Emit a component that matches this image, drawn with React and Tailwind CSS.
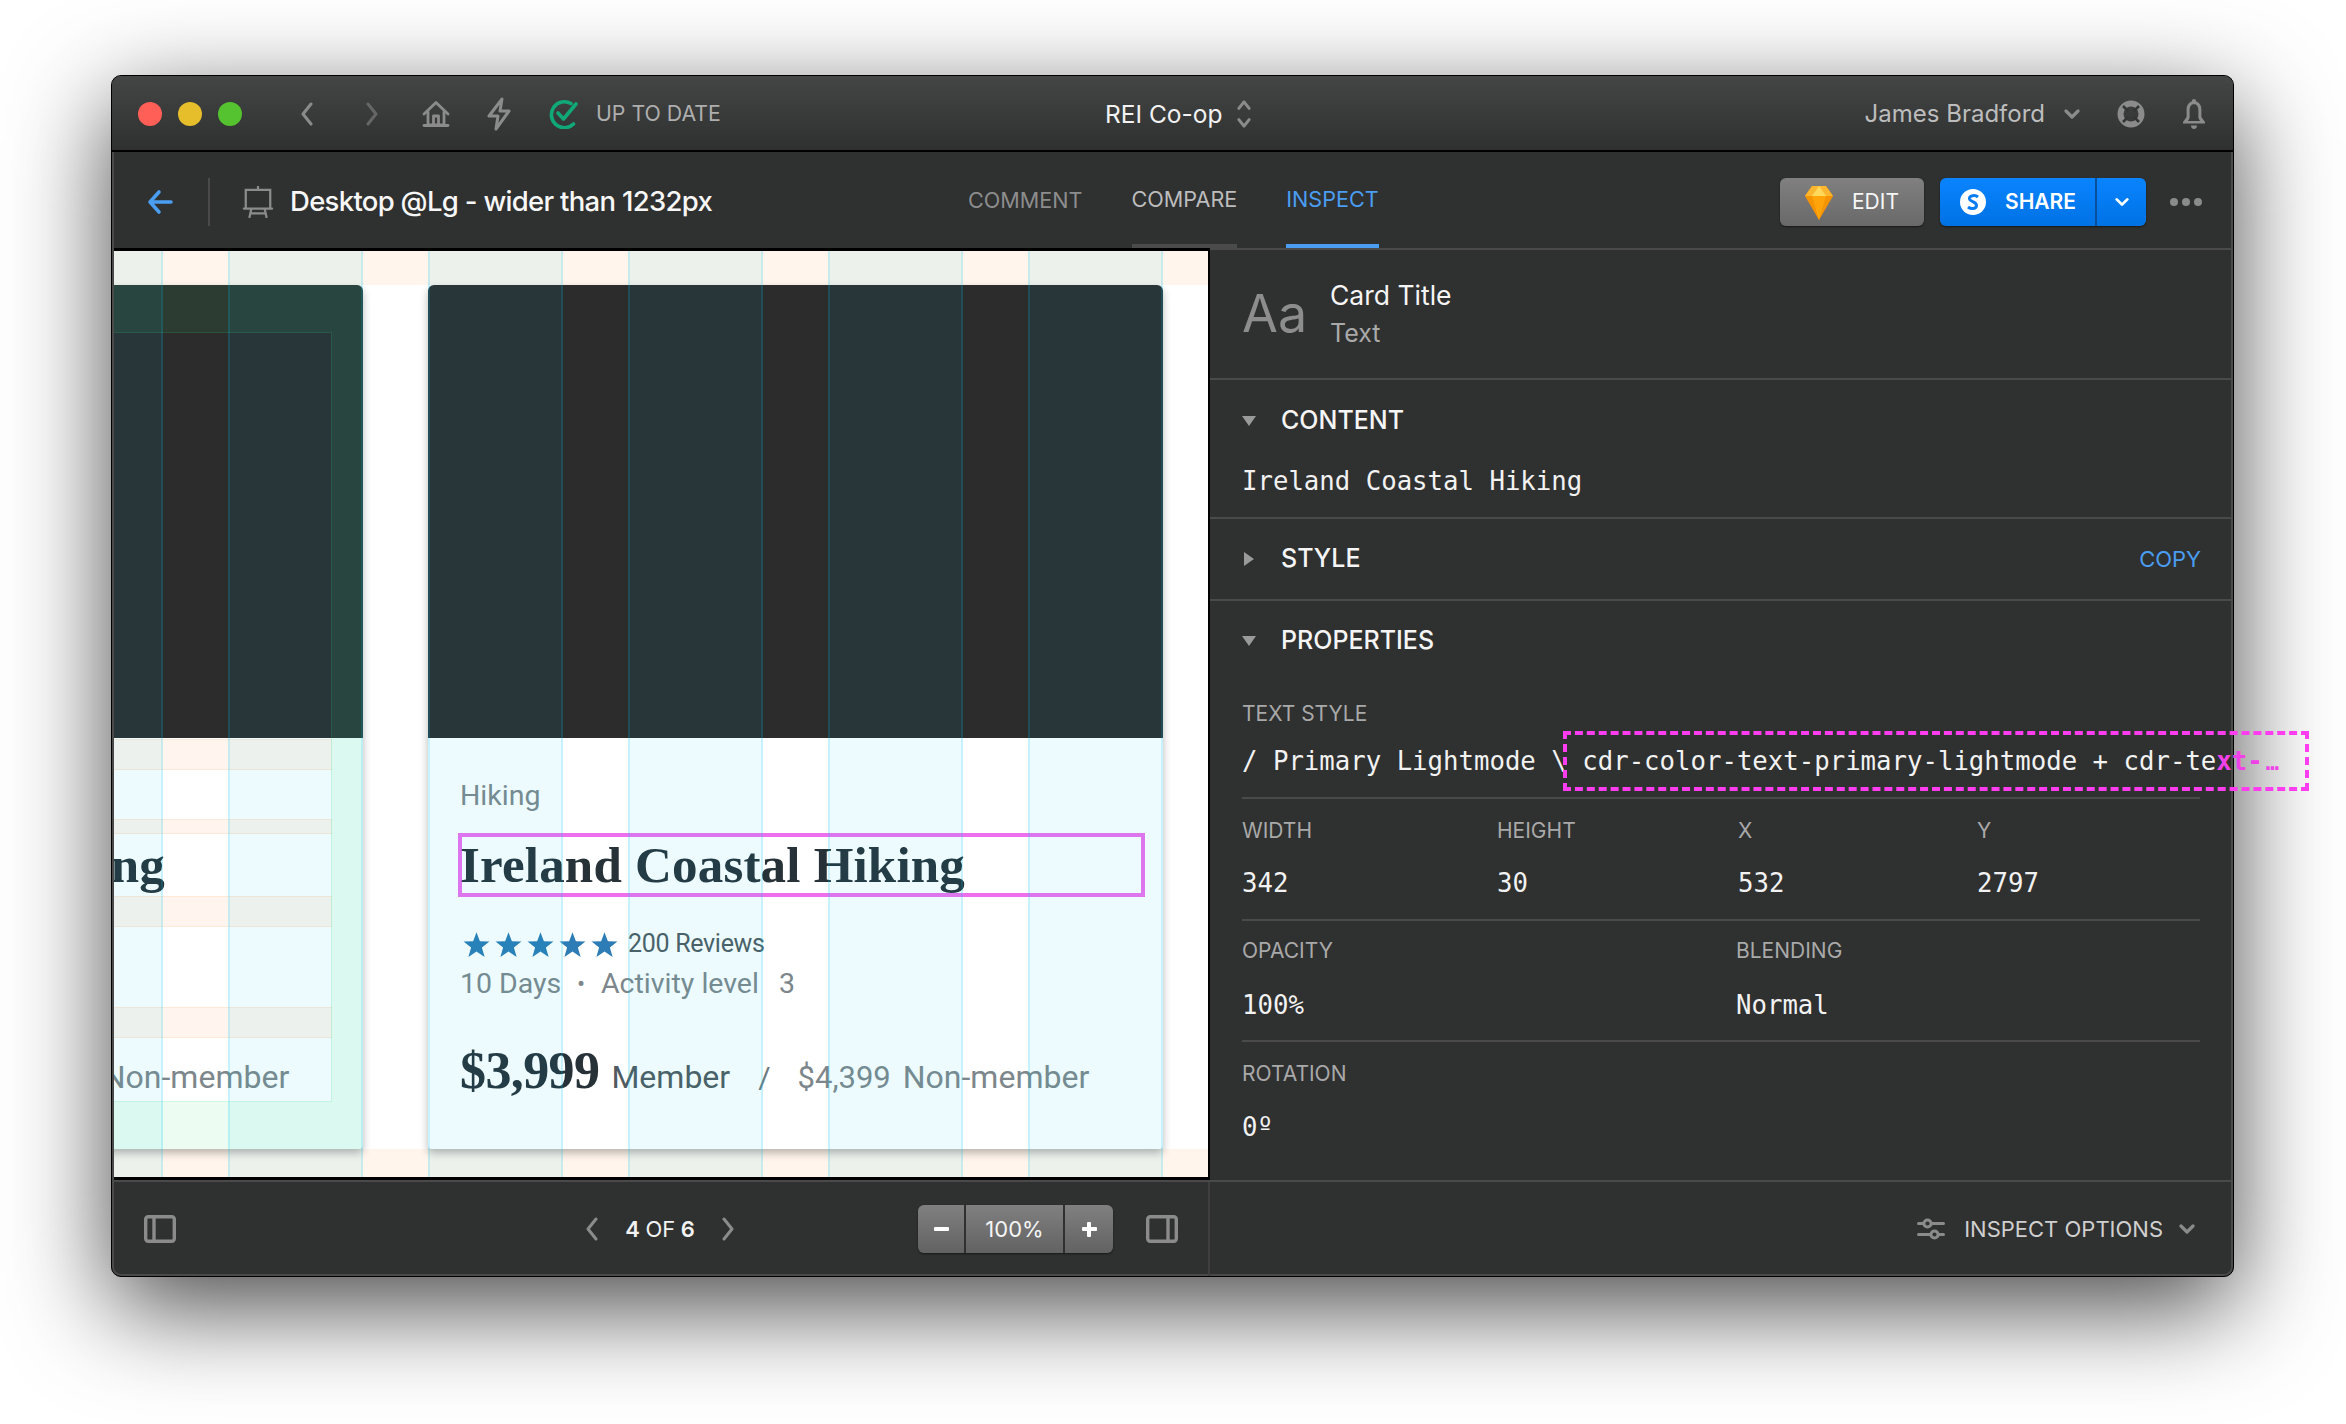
const uiFont = { fontFamily: '"Inter", "Liberation Sans", sans-serif' };

const GUIDE_COLS = [49, 135, 135, 135, 135, 135];

const Chevron = ({ dir = "left", className = "" }) => {
  const paths = {
    left: "M11 2 L3 12 L11 22",
    right: "M3 2 L11 12 L3 22",
  };
  return (
    <svg viewBox="0 0 14 24" className={className} fill="none" stroke="currentColor" strokeWidth="3" strokeLinecap="round" strokeLinejoin="round">
      <path d={paths[dir]} />
    </svg>
  );
};

const ChevronDown = ({ className = "" }) => (
  <svg viewBox="0 0 16 10" className={className} fill="none" stroke="currentColor" strokeWidth="3.2" strokeLinecap="round" strokeLinejoin="round">
    <path d="M2 2 L8 8 L14 2" />
  </svg>
);

const Triangle = ({ open }) => (
  <svg viewBox="0 0 14 14" className="h-[14px] w-[14px] text-[#9a9a9a]" fill="currentColor">
    {open ? <path d="M0 2 H14 L7 12 Z" /> : <path d="M2 0 V14 L12 7 Z" />}
  </svg>
);

const Star = () => (
  <svg viewBox="0 0 24 24" className="h-[27px] w-[27px] text-[#2d7cb5]" fill="currentColor">
    <path d="M12 1 L15 9 L23.5 9.4 L16.8 14.6 L19.2 23 L12 18.2 L4.8 23 L7.2 14.6 L.5 9.4 L9 9 Z" />
  </svg>
);

const Band = ({ className = "" }) => (
  <div className={`absolute right-[31px] left-[31px] border-y border-[rgba(255,140,40,0.12)] bg-[rgba(255,130,40,0.08)] ${className}`} />
);

const TripCard = ({ framed, selected }) => (
  <div className="relative h-full w-[735px] shrink-0 rounded-t-[6px] rounded-b-[4px] bg-white shadow-[0_4px_8px_rgba(0,0,0,0.28)]">
    <div className="h-[453px] rounded-t-[6px] bg-[#2c2c2c]" />
    <div className="pt-[40px] pl-[32px]" style={{ fontFamily: '"Roboto", sans-serif' }}>
      <p className="text-[28.5px] leading-[36px] text-[#7d878b]">Hiking</p>
      <div className={`mt-[19px] -ml-[2px] h-[64px] w-[687px] border-[4px] ${selected ? "border-[#ee6fee]" : "border-transparent"}`}>
        <p className="-ml-[2px] whitespace-nowrap font-['Liberation_Serif',serif] text-[51px] leading-[56px] font-bold tracking-[0.2px] text-[#263238]">
          Ireland Coastal Hiking
        </p>
      </div>
      <div className="mt-[31px] flex h-[32px] items-center">
        <div className="flex w-[168px] gap-[5px] pl-[3px]">
          <Star />
          <Star />
          <Star />
          <Star />
          <Star />
        </div>
        <span className="text-[25px] tracking-[-0.3px] text-[#4f5b60]">200 Reviews</span>
      </div>
      <div className="mt-[6px] flex h-[36px] items-center text-[28.5px] text-[#7d878b]">
        <span className="w-[103px]">10 Days</span>
        <span className="w-[38px] pl-[14px] text-[24px]">•</span>
        <span className="w-[178px] whitespace-nowrap">Activity level</span>
        <span>3</span>
      </div>
      <div className="mt-[30px] flex h-[60px] items-baseline whitespace-nowrap">
        <span className="font-['Liberation_Serif',serif] text-[52px] font-bold tracking-[-0.6px] text-[#263238]">$3,999</span>
        <span className="ml-[12px] text-[32px] text-[#4f5b60]">Member</span>
        <span className="ml-[28px] text-[30px] text-[#6f7a7f]">/</span>
        <span className="ml-[27px] text-[31px] text-[#7d878b]">$4,399</span>
        <span className="ml-[12px] text-[32px] text-[#7d878b]">Non-member</span>
      </div>
    </div>
    {framed && (
      <>
        <Band className="top-[454px] h-[31px]" />
        <Band className="top-[534px] h-[15px]" />
        <Band className="top-[611px] h-[31px]" />
        <Band className="top-[722px] h-[31px]" />
        <div className="absolute inset-0 rounded-t-[6px] border-x-[31px] border-y-[47px] border-[rgba(40,225,110,0.09)]">
          <div className="h-full w-full border border-[rgba(40,225,110,0.22)]" />
        </div>
      </>
    )}
  </div>
);

const Guides = () => (
  <div className="pointer-events-none absolute inset-0 flex">
    {GUIDE_COLS.map((width, i) => (
      <div key={i} className="flex shrink-0">
        <div
          className={`h-full border-r-2 border-[rgba(0,200,240,0.16)] bg-[rgba(0,200,240,0.07)] ${i > 0 ? "border-l-2" : ""}`}
          style={{ width }}
        />
        <div className="h-full w-[65px]" />
      </div>
    ))}
  </div>
);

const Canvas = () => (
  <div className="relative h-full w-[1096px] shrink-0 overflow-hidden border-y-[3px] border-r-2 border-black bg-white">
    <div className="flex h-full flex-col">
      <div className="h-[34px] shrink-0 bg-[#fff5ec]" />
      <div className="flex min-h-0 flex-1 gap-[65px]">
        <div className="-ml-[486px]">
          <TripCard framed />
        </div>
        <TripCard selected />
      </div>
      <div className="h-[28px] shrink-0 bg-[#fff5ec]" />
    </div>
    <Guides />
  </div>
);

const Label = ({ children }) => <p className="text-[21px] leading-[30px] text-[#a9a9a9]">{children}</p>;

const Mono = ({ children, className = "" }) => (
  <p className={`font-['DejaVu_Sans_Mono',monospace] text-[25.7px] leading-[30px] whitespace-nowrap text-[#f2f2f2] ${className}`}>{children}</p>
);

const Rule = ({ className = "" }) => <div className={`h-[2px] w-[958px] bg-[#4a4a4a] ${className}`} />;

const Heading = ({ open, children, right }) => (
  <div className="flex h-full items-center pr-[32px] pl-[32px]">
    <Triangle open={open} />
    <span className="ml-[25px] text-[25px] font-medium text-[#f5f5f5]">{children}</span>
    {right}
  </div>
);

const InspectPanel = () => (
  <div className="flex min-w-0 flex-1 flex-col border-t-2 border-[#4a4a4a]">
    <div className="flex h-[130px] shrink-0 items-center border-b-2 border-[#4a4a4a] pl-[32px]">
      <span className="w-[88px] text-[52px] leading-none text-[#8d8d8d]">Aa</span>
      <div>
        <p className="text-[26.5px] leading-[38px] text-[#f5f5f5]">Card Title</p>
        <p className="text-[25px] leading-[38px] text-[#a9a9a9]">Text</p>
      </div>
    </div>
    <div className="h-[139px] shrink-0 border-b-2 border-[#4a4a4a]">
      <div className="h-[82px]">
        <Heading open>CONTENT</Heading>
      </div>
      <Mono className="pl-[32px] leading-[38px]">Ireland Coastal Hiking</Mono>
    </div>
    <div className="h-[82px] shrink-0 border-b-2 border-[#4a4a4a]">
      <Heading right={<span className="ml-auto text-[22px] text-[#4a9df0]">COPY</span>}>STYLE</Heading>
    </div>
    <div className="relative flex-1 pl-[32px]">
      <div className="-ml-[32px] h-[80px]">
        <Heading open>PROPERTIES</Heading>
      </div>
      <div className="mt-[18px]">
        <Label>TEXT STYLE</Label>
      </div>
      <Mono className="mt-[17px]">
        / Primary Lightmode \ cdr-color-text-primary-lightmode + cdr-te
        <span className="font-bold text-[#f040e8]">xt-</span>
        <span className="ml-[3px] text-[22px] font-bold text-[#f040e8]">…</span>
      </Mono>
      <div className="absolute top-[130px] left-[353px] h-[60px] w-[746px] border-[4px] border-dashed border-[#ff3df0]" />
      <Rule className="mt-[19px]" />
      <div className="mt-[17px] grid grid-cols-[255px_241px_239px_1fr]">
        {["WIDTH", "HEIGHT", "X", "Y"].map((label) => (
          <Label key={label}>{label}</Label>
        ))}
      </div>
      <div className="mt-[22px] grid grid-cols-[255px_241px_239px_1fr]">
        {["342", "30", "532", "2797"].map((value) => (
          <Mono key={value}>{value}</Mono>
        ))}
      </div>
      <Rule className="mt-[21px]" />
      <div className="mt-[15px] grid grid-cols-[494px_1fr]">
        <Label>OPACITY</Label>
        <Label>BLENDING</Label>
      </div>
      <div className="mt-[24px] grid grid-cols-[494px_1fr]">
        <Mono>100%</Mono>
        <Mono>Normal</Mono>
      </div>
      <Rule className="mt-[20px]" />
      <div className="mt-[17px]">
        <Label>ROTATION</Label>
      </div>
      <Mono className="mt-[23px]">0º</Mono>
    </div>
  </div>
);

const PanelIcon = ({ side }) => (
  <svg viewBox="0 0 32 28" className="h-[28px] w-[32px] text-[#8b8b8b]" fill="none" stroke="currentColor" strokeWidth="3.4">
    <rect x="1.7" y="1.7" width="28.6" height="24.6" rx="2.5" />
    <path d={side === "left" ? "M10 2 V26" : "M22 2 V26"} />
  </svg>
);

const BottomBar = () => (
  <div className="flex h-[96px] shrink-0 border-t-2 border-[#4a4a4a]">
    <div className="grid w-[1098px] grid-cols-[1fr_auto_1fr] items-center border-r-2 border-[#3f3f3f]">
      <div className="pl-[32px]">
        <PanelIcon side="left" />
      </div>
      <div className="flex items-center text-[#8b8b8b]">
        <Chevron dir="left" className="h-[24px] w-[14px]" />
        <span className="mx-[26px] text-[22px] font-semibold text-[#f2f2f2]">
          4 <span className="font-normal">OF</span> 6
        </span>
        <Chevron dir="right" className="h-[24px] w-[14px]" />
      </div>
      <div className="flex items-center justify-end gap-[33px] pr-[30px]">
        <div className="flex h-[48px] w-[195px] overflow-hidden rounded-[6px] bg-gradient-to-b from-[#808080] to-[#626262] text-[#f5f5f5] shadow-[0_1px_2px_rgba(0,0,0,0.5)]">
          <div className="flex w-[48px] items-center justify-center border-r-2 border-[#2f3030]">
            <span className="h-[4px] w-[15px] rounded-[1px] bg-white" />
          </div>
          <div className="flex flex-1 items-center justify-center border-r-2 border-[#2f3030] text-[22px]">100%</div>
          <div className="relative flex w-[48px] items-center justify-center">
            <span className="h-[4px] w-[15px] rounded-[1px] bg-white" />
            <span className="absolute h-[15px] w-[4px] rounded-[1px] bg-white" />
          </div>
        </div>
        <PanelIcon side="right" />
      </div>
    </div>
    <div className="flex flex-1 items-center justify-end pr-[38px]">
      <svg viewBox="0 0 28 24" className="h-[24px] w-[28px] text-[#8b8b8b]" fill="none" stroke="currentColor" strokeWidth="3" strokeLinecap="round">
        <path d="M1.5 6.5 H6 M15 6.5 H26.5 M1.5 17.5 H13 M22 17.5 H26.5" />
        <circle cx="10.5" cy="6.5" r="3.6" />
        <circle cx="17.5" cy="17.5" r="3.6" />
      </svg>
      <span className="ml-[19px] text-[22px] text-[#cfcfcf]">INSPECT OPTIONS</span>
      <ChevronDown className="ml-[16px] h-[10px] w-[16px] text-[#8b8b8b]" />
    </div>
  </div>
);

const TitleBar = () => (
  <div className="flex h-[76px] shrink-0 items-center rounded-t-[9px] border-b-2 border-black bg-gradient-to-b from-[#444545] to-[#2f3030] pt-[2px] pr-[26px]">
    <div className="flex w-[993px] shrink-0 items-center pl-[26px]">
      <span className="h-[24px] w-[24px] rounded-full bg-[#ff5f57]" />
      <span className="ml-[16px] h-[24px] w-[24px] rounded-full bg-[#e6bd2b]" />
      <span className="ml-[16px] h-[24px] w-[24px] rounded-full bg-[#55c22f]" />
      <Chevron dir="left" className="ml-[58px] h-[24px] w-[14px] text-[#8b8b8b]" />
      <Chevron dir="right" className="ml-[51px] h-[24px] w-[14px] text-[#666]" />
      <svg viewBox="0 0 28 28" className="ml-[43px] h-[28px] w-[28px] text-[#8b8b8b]" fill="none" stroke="currentColor" strokeWidth="2.8" strokeLinejoin="round" strokeLinecap="round">
        <path d="M2 14 L14 2.5 L26 14" />
        <path d="M6 12 V25 H22 V12" />
        <path d="M11.5 25 V16 H16.5 V25" />
        <path d="M2 25.5 H26" />
      </svg>
      <svg viewBox="0 0 26 34" className="ml-[36px] h-[34px] w-[26px] text-[#8b8b8b]" fill="none" stroke="currentColor" strokeWidth="3" strokeLinejoin="round">
        <path d="M16 2 L3 19 H12 L10 32 L23 14 H14 Z" />
      </svg>
      <svg viewBox="0 0 30 30" className="ml-[37px] h-[30px] w-[30px]" fill="none" stroke="#10a877" strokeWidth="3.6" strokeLinecap="round" strokeLinejoin="round">
        <path d="M24.5 25 A13 13 0 1 1 22 4.5" />
        <path d="M9 14 L14.5 20 L27 5" />
      </svg>
      <span className="ml-[17px] text-[21.3px] whitespace-nowrap text-[#aeaeae]">UP TO DATE</span>
    </div>
    <span className="text-[24.5px] whitespace-nowrap text-[#f2f2f2]">REI Co-op</span>
    <svg viewBox="0 0 16 32" className="ml-[13px] h-[30px] w-[16px] text-[#8b8b8b]" fill="none" stroke="currentColor" strokeWidth="3.2" strokeLinecap="round" strokeLinejoin="round">
      <path d="M2.5 10 L8 3 L13.5 10 M2.5 22 L8 29 L13.5 22" />
    </svg>
    <span className="ml-auto text-[24px] whitespace-nowrap text-[#bdbdbd]">James Bradford</span>
    <ChevronDown className="ml-[19px] h-[10px] w-[16px] text-[#8b8b8b]" />
    <svg viewBox="0 0 30 30" className="ml-[36px] h-[30px] w-[30px] text-[#8b8b8b]" fill="none" stroke="currentColor">
      <circle cx="15" cy="15" r="10.5" strokeWidth="6" />
      <path d="M7 7 L12 12 M23 7 L18 12 M7 23 L12 18 M23 23 L18 18" stroke="#333434" strokeWidth="2.6" />
    </svg>
    <svg viewBox="0 0 26 32" className="ml-[35px] h-[32px] w-[26px] text-[#8b8b8b]" fill="currentColor">
      <path d="M13 1 C14.5 1 15.2 2.2 15.2 3.6 C19 5 20.4 8 20.4 12 V19 L24 24 V25.5 H2 V24 L5.6 19 V12 C5.6 8 7 5 10.8 3.6 C10.8 2.2 11.5 1 13 1 Z M10 27.5 H16 C16 29.5 14.8 31 13 31 C11.2 31 10 29.5 10 27.5 Z M8.6 12.5 V20 L7 23 H19 L17.4 20 V12.5 C17.4 8 15.5 6.2 13 6.2 C10.5 6.2 8.6 8 8.6 12.5 Z" fillRule="evenodd" />
    </svg>
  </div>
);

const Toolbar = () => (
  <div className="flex h-[96px] shrink-0 items-stretch">
    <div className="flex w-[856px] shrink-0 items-center pt-[3px] pl-[35px]">
      <svg viewBox="0 0 26 26" className="h-[26px] w-[26px] text-[#4a9df0]" fill="none" stroke="currentColor" strokeWidth="3.6" strokeLinecap="round" strokeLinejoin="round">
        <path d="M12 3 L3 13 L12 23 M4 13 H24" />
      </svg>
      <div className="ml-[35px] h-[48px] w-[2px] bg-[#4a4a4a]" />
      <svg viewBox="0 0 32 34" className="ml-[32px] h-[32px] w-[32px] text-[#8b8b8b]" fill="none" stroke="currentColor" strokeWidth="2.4" strokeLinecap="round">
        <path d="M16 1 V4 M3 4 H29 V24 H3 Z M1 24 H31 M9 24 L7 33 M23 24 L25 33 M8 29 H24" />
      </svg>
      <span className="ml-[16px] text-[27.5px] font-medium tracking-[-0.7px] whitespace-nowrap text-[#f7f7f7]">Desktop @Lg - wider than 1232px</span>
    </div>
    <div className="flex gap-[49px] text-[21.6px] whitespace-nowrap">
      <div className="flex items-center pt-[1px] text-[#8d8d8d]">COMMENT</div>
      <div className="flex items-center border-b-4 border-[#4b4b4b] pt-[2px] text-[#bdbdbd]">COMPARE</div>
      <div className="flex items-center border-b-4 border-[#4a9df0] pt-[2px] text-[#4a9df0]">INSPECT</div>
    </div>
    <div className="ml-auto flex items-center pt-[3px] pr-[31px]">
      <div className="flex h-[48px] w-[144px] items-center rounded-[6px] bg-gradient-to-b from-[#808080] to-[#696969] pl-[24px] shadow-[0_1px_2px_rgba(0,0,0,0.5)]">
        <svg viewBox="0 0 30 40" className="h-[40px] w-[30px]">
          <path d="M8 4 H22 L29 14 L15 38 L1 14 Z" fill="#f59300" />
          <path d="M8 4 H22 L29 14 H1 Z" fill="#fdb62f" />
          <path d="M15 4 L22 14 H8 Z" fill="#fed95b" />
          <path d="M8 14 H22 L15 38 Z" fill="#ffa50a" />
        </svg>
        <span className="ml-[18px] text-[21px] text-[#f7f7f7]">EDIT</span>
      </div>
      <div className="ml-[16px] flex h-[48px] w-[206px] rounded-[6px] bg-gradient-to-b from-[#0a84ff] to-[#0072e4] text-white shadow-[0_1px_2px_rgba(0,0,0,0.5)]">
        <div className="flex w-[157px] items-center border-r-2 border-[#0a4f9c] pl-[20px]">
          <svg viewBox="0 0 26 26" className="h-[26px] w-[26px]">
            <circle cx="13" cy="13" r="13" fill="white" />
            <path d="M18 8 C15 5.5 9 6.5 9.5 10 C10 13 16.5 12.5 16.5 16.5 C16.5 20 11 20.5 8 18" fill="none" stroke="#0a7cf0" strokeWidth="3" />
          </svg>
          <span className="ml-[19px] text-[21px] font-semibold">SHARE</span>
        </div>
        <div className="flex flex-1 items-center justify-center">
          <ChevronDown className="h-[10px] w-[14px]" />
        </div>
      </div>
      <div className="ml-[24px] flex gap-[4px]">
        <span className="h-[8px] w-[8px] rounded-full bg-[#8b8b8b]" />
        <span className="h-[8px] w-[8px] rounded-full bg-[#8b8b8b]" />
        <span className="h-[8px] w-[8px] rounded-full bg-[#8b8b8b]" />
      </div>
    </div>
  </div>
);

const App = () => (
  <div className="h-[1424px] w-[2346px] overflow-hidden bg-white pt-[75px] pl-[111px]" style={uiFont}>
    <div className="flex h-[1202px] w-[2123px] flex-col rounded-[10px] border border-black bg-[#2f3030] shadow-[0_30px_100px_rgba(0,0,0,0.72),inset_0_0_0_2px_#4a4a4a]">
      <TitleBar />
      <Toolbar />
      <div className="flex min-h-0 flex-1 pl-[2px]">
        <Canvas />
        <InspectPanel />
      </div>
      <BottomBar />
    </div>
  </div>
);

export default App;
